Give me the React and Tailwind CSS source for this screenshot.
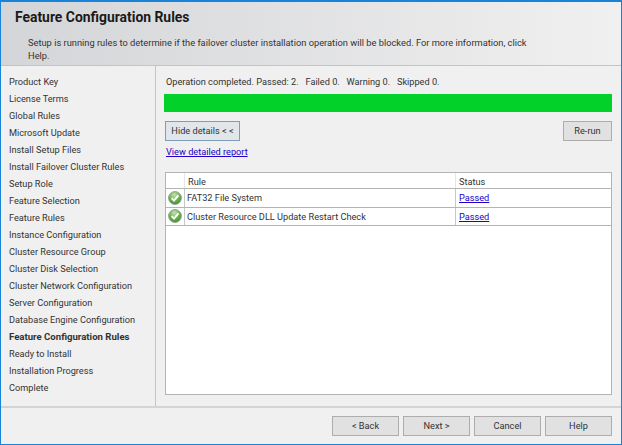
import React from 'react'

const steps = [
  'Product Key', 'License Terms', 'Global Rules', 'Microsoft Update', 'Install Setup Files',
  'Install Failover Cluster Rules', 'Setup Role', 'Feature Selection', 'Feature Rules',
  'Instance Configuration', 'Cluster Resource Group', 'Cluster Disk Selection',
  'Cluster Network Configuration', 'Server Configuration', 'Database Engine Configuration',
  'Feature Configuration Rules', 'Ready to Install', 'Installation Progress', 'Complete',
]

const rows = ['FAT32 File System', 'Cluster Resource DLL Update Restart Check']

const CheckIcon = () => (
  <svg width="14" height="14" viewBox="0 0 14 14">
    <defs>
      <radialGradient id="ok" cx="45%" cy="25%" r="80%">
        <stop offset="0%" stopColor="#c4e4ac" />
        <stop offset="55%" stopColor="#69b04e" />
        <stop offset="100%" stopColor="#3c8c33" />
      </radialGradient>
    </defs>
    <circle cx="7" cy="7" r="6.4" fill="url(#ok)" stroke="#8a9c85" strokeWidth="0.9" />
    <path d="M3.6 7.2 L6 9.6 L10.4 4.4" fill="none" stroke="#fff" strokeWidth="1.9" />
  </svg>
)

const Button = ({ children, className = '' }) => (
  <button className={`h-[20px] bg-[#e1e1e1] border border-[#adadad] text-[#333] ${className}`}>{children}</button>
)

export default function App() {
  return (
    <div className="w-[622px] h-[445px] flex flex-col overflow-hidden border-x border-b border-t-2 border-[#1883d7] bg-[#f0f0f0] text-[9.2px] text-[#333] font-['Roboto',sans-serif]">
      {/* Header */}
      <div className="h-[64px] shrink-0 border-b border-[#c4c4c4] bg-gradient-to-r from-[#d4d5d8] to-[#f0f0f0] pl-[14px] pr-[76px]">
        <h1 className="pt-[5px] text-[13.9px] leading-[20px] font-bold text-[#1a1a1a]">Feature Configuration Rules</h1>
        <p className="mt-[9px] pl-[13px] text-[9.3px] leading-[13px]">
          Setup is running rules to determine if the failover cluster installation operation will be blocked. For more information, click Help.
        </p>
      </div>

      <div className="flex flex-1 min-h-0">
        {/* Step list */}
        <div className="w-[155px] shrink-0 border-r border-[#c4c4c4] pt-[7px] pl-[8px]">
          {steps.map((s) => (
            <div key={s} className={`h-[17px] leading-[17px] whitespace-nowrap ${s === 'Feature Configuration Rules' ? 'font-bold text-[9.6px]' : ''}`}>{s}</div>
          ))}
        </div>

        {/* Main panel */}
        <div className="flex-1 flex flex-col pl-[8px] pr-[9px] pt-[8px] pb-[11px]">
          <div className="pl-[2px] h-[15px] leading-[15px] whitespace-pre">Operation completed. Passed: 2.   Failed 0.   Warning 0.   Skipped 0.</div>
          <div className="mt-[5px] h-[18px] bg-[#02d129]" />
          <div className="mt-[9px] flex justify-between pl-[1px]">
            <Button className="w-[75px] !bg-[#e1e6ea] !border-[#7f9db9]">Hide details &lt; &lt;</Button>
            <Button className="w-[49px]">Re-run</Button>
          </div>
          <a className="mt-[4px] ml-[2px] h-[14px] leading-[14px] text-[#2200cc] underline">View detailed report</a>
          <div className="mt-[13px] ml-[1px] flex-1 bg-white border border-[#b4b4b4]">
            <div className="flex h-[16px] border-b border-[#b4b4b4] leading-[17px]">
              <div className="w-[19px] border-r border-[#e6e6e6]" />
              <div className="w-[271px] pl-[3px] border-r border-[#e6e6e6]">Rule</div>
              <div className="pl-[3px]">Status</div>
            </div>
            {rows.map((r) => (
              <div key={r} className="flex h-[18.5px] border-b border-[#b4b4b4] leading-[18px]">
                <div className="w-[19px] flex items-center justify-center border-r border-[#c8c8c8]"><CheckIcon /></div>
                <div className="w-[271px] pl-[2px] border-r border-[#c8c8c8]">{r}</div>
                <a className="pl-[3px] text-[#2200cc] underline">Passed</a>
              </div>
            ))}
          </div>
        </div>
      </div>

      {/* Footer */}
      <div className="h-[38px] shrink-0 border-t-2 border-[#d4d4d4] flex justify-end gap-[4px] pt-[8px] pr-[9px]">
        <Button className="w-[67px]">&lt; Back</Button>
        <Button className="w-[67px]">Next &gt;</Button>
        <Button className="w-[67px]">Cancel</Button>
        <Button className="w-[67px]">Help</Button>
      </div>
    </div>
  )
}
